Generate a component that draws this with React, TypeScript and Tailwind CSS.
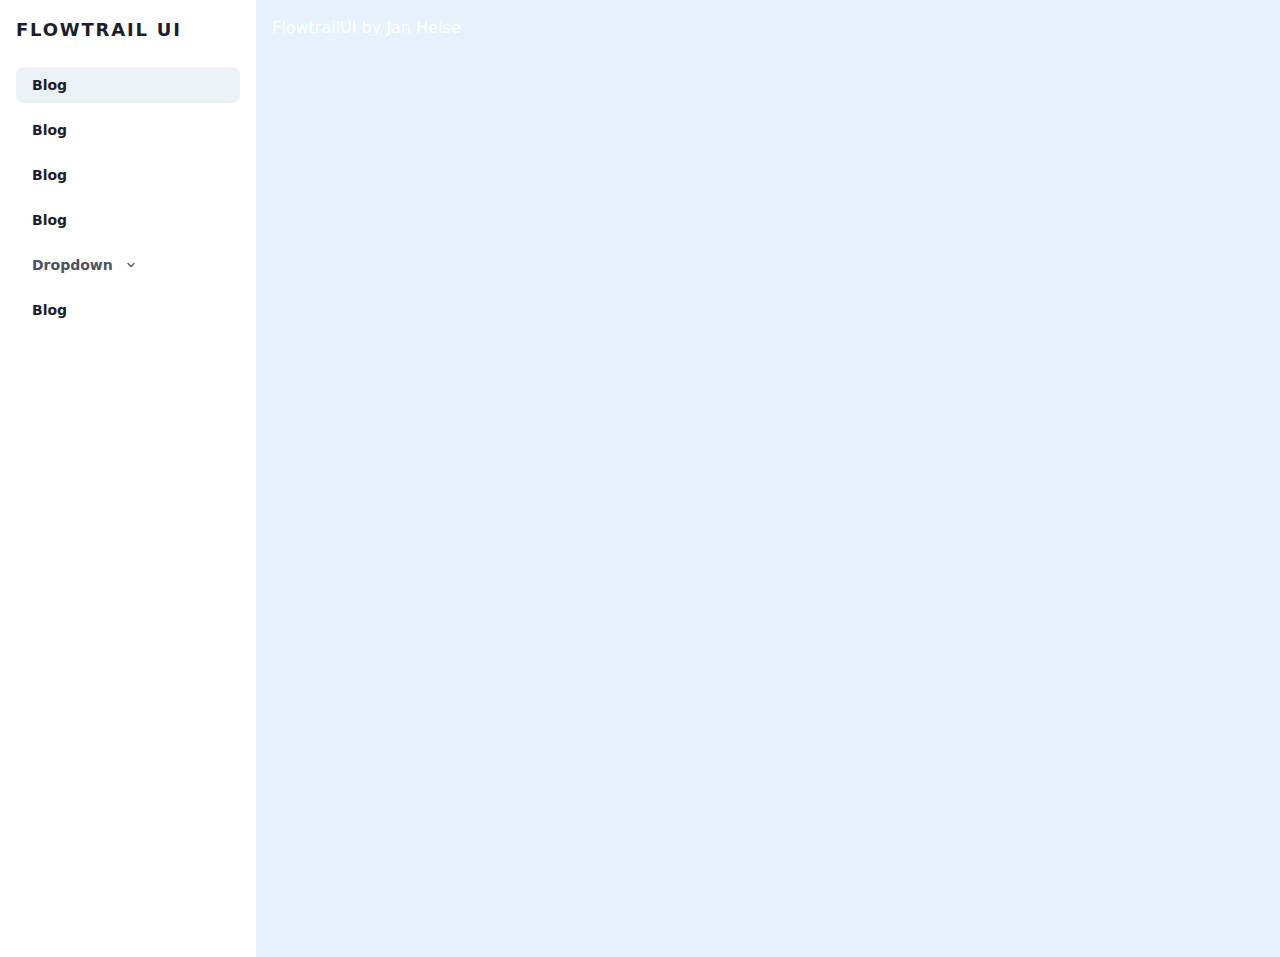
import { ChevronDown } from "lucide-react";

const items = ["Blog", "Blog", "Blog", "Blog"];

export default function App() {
  return (
    <div className="flex h-[957px] w-full font-['DejaVu_Sans',sans-serif]">
      {/* Sidebar */}
      <aside className="w-64 shrink-0 bg-white p-4">
        <h1 className="text-lg leading-7 font-bold tracking-widest text-[#1c1f2a]">
          FLOWTRAIL UI
        </h1>

        <nav className="mt-[23px] flex flex-col gap-[9px]">
          {items.map((item, i) => (
            <a
              key={i}
              className={
                i === 0
                  ? "flex h-9 items-center rounded-lg bg-[#ecf1f6] px-4 text-sm font-bold text-[#1c1f2a]"
                  : "flex h-9 items-center rounded-lg px-4 text-sm font-bold text-[#1c1f2a]"
              }
            >
              {item}
            </a>
          ))}
          <button className="flex h-9 items-center gap-3 rounded-lg px-4 text-sm font-bold text-[#4b5262]">
            Dropdown
            <ChevronDown size={12} strokeWidth={2.5} />
          </button>
          <a className="flex h-9 items-center rounded-lg px-4 text-sm font-bold text-[#1c1f2a]">
            Blog
          </a>
        </nav>
      </aside>

      {/* Main */}
      <main className="flex-1 bg-[#e7f1fb] p-4">
        <p className="text-base leading-6 text-white">FlowtrailUI by Jan Heise</p>
      </main>
    </div>
  );
}
